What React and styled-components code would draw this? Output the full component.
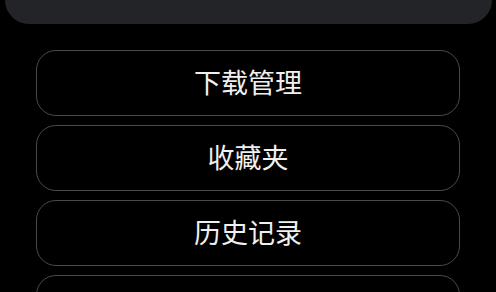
import React from "react";
import styled, { createGlobalStyle } from "styled-components";

const Global = createGlobalStyle`
  html, body {
    margin: 0;
    padding: 0;
    background: #000;
    overflow: hidden;
  }
  body {
    font-family: "Noto Sans CJK SC", "Noto Sans", sans-serif;
  }
`;

const Page = styled.div`
  width: 496px;
  height: 292px;
  background: #000;
  display: flex;
  flex-direction: column;
  overflow: hidden;
`;

const TopPanel = styled.div`
  height: 24px;
  margin: 0 4px 0 5px;
  background: #222428;
  border-radius: 0 0 24px 24px;
  flex-shrink: 0;
`;

const Menu = styled.div`
  display: flex;
  flex-direction: column;
  gap: 9px;
  padding: 26px 36px 0 36px;
`;

const MenuButton = styled.button`
  box-sizing: border-box;
  height: 66px;
  flex-shrink: 0;
  width: 100%;
  background: transparent;
  border: 1px solid #4a4a4c;
  border-radius: 20px;
  color: #f0f0f0;
  font-family: "Noto Sans CJK SC", "Noto Sans", sans-serif;
  font-size: 27px;
  line-height: 1;
  display: flex;
  align-items: center;
  justify-content: center;
  padding: 0 0 4px 0;
`;

const items = ["下载管理", "收藏夹", "历史记录", ""];

export default function App() {
  return (
    <>
      <Global />
      <Page>
        <TopPanel />
        <Menu>
          {items.map((t, i) => (
            <MenuButton key={i}>{t}</MenuButton>
          ))}
        </Menu>
      </Page>
    </>
  );
}
